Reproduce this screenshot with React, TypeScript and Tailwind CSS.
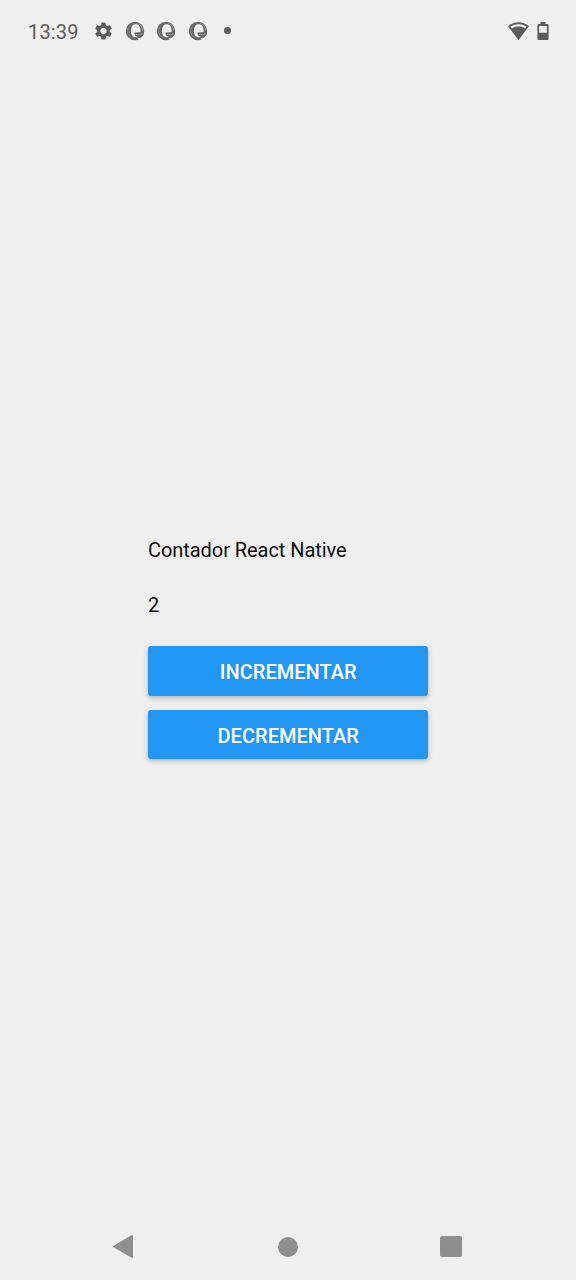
import { useState } from 'react';
import { MdSettings } from 'react-icons/md';

function SwirlIcon() {
  return (
    <svg className="h-5 w-5" viewBox="0 0 20 20" fill="none">
      <circle cx="10" cy="10" r="9.2" fill="#6a6a6a" />
      <path d="M10.5 3.3C13.9 3.3 15.8 6 15.6 10.2C15.3 13.5 14 16.3 10.8 16.3C7.5 16.3 5.9 13.3 6 9.7C6.1 6 7.6 3.3 10.5 3.3Z" fill="#efefef" />
      <path d="M12.5 2.4C15.8 3.6 17.6 6.2 17.7 9.6" stroke="#a2a2a2" strokeWidth=".9" />
      <path d="M3.4 6.2C2.1 9.4 2.7 13.3 5.4 15.9" stroke="#8c8c8c" strokeWidth=".8" />
      <path d="M9.2 11.4C11.6 12 14.8 10.3 19.1 10.8C18.7 14.3 16.6 16.2 14 16C11.2 15.8 9.2 14.2 9.2 11.4Z" fill="#666" />
      <path d="M10.8 13.6C13 14.1 15.5 13 18.2 12.9" stroke="#aaa" strokeWidth=".8" />
      <path d="M12.3 17.2C14.8 17.6 17.2 16.6 18.6 14.3L20 16L14.5 20Z" fill="#efefef" />
    </svg>
  );
}

function StatusBar() {
  return (
    <header className="flex h-[61px] shrink-0 items-center pl-7 pr-[27px] text-[#5c5c5c]">
      <span className="w-[65px] pt-[2px] text-[20px] leading-6 tracking-[0.15px]">13:39</span>
      <MdSettings className="h-[22px] w-[21px]" />
      <div className="ml-[11px] flex gap-[11.3px]">
        <SwirlIcon />
        <SwirlIcon />
        <SwirlIcon />
      </div>
      <span className="ml-[16.4px] h-[7px] w-[7px] rounded-full bg-[#5c5c5c]" />
      <div className="ml-auto flex items-center gap-[8.5px]">
        <svg className="h-[18px] w-[21px]" viewBox="0 0 21 18">
          <path d="M0 4.3C6-1.1 15-1.1 21 4.3L10.5 18Z" fill="#5c5c5c" />
          <path d="M2.5 4.6C7.2 1.3 13.8 1.3 18.5 4.6L17.2 6.4C13.2 3.8 7.8 3.8 3.8 6.4Z" fill="#efefef" />
        </svg>
        <svg className="h-[18px] w-3" viewBox="0 0 12 18">
          <path fillRule="evenodd" d="M3.5 0H8.5V2H10.4Q11.6 2 11.6 3.2V16.8Q11.6 18 10.4 18H1.6Q.4 18 .4 16.8V3.2Q.4 2 1.6 2H3.5ZM2.2 4V10.8H9.8V4Z" fill="#5c5c5c" />
        </svg>
      </div>
    </header>
  );
}

function CounterButton({ title, onPress }: { title: string; onPress: () => void }) {
  return (
    <button
      onClick={onPress}
      className="flex h-[49.5px] w-full items-center justify-center rounded-[3px] bg-[#2196f3] pt-[3px] pl-[0.5px] text-[20px] font-medium tracking-[0.03px] text-white shadow-[0_2px_5px_rgba(0,0,0,0.26)]"
    >
      {title}
    </button>
  );
}

export default function App() {
  const [count, setCount] = useState(2);
  return (
    <div className="flex h-[1280px] w-[576px] flex-col bg-[#efefef] font-['Roboto',sans-serif]">
      <StatusBar />
      <main className="flex grow flex-col items-center pt-[475px]">
        <div className="w-[280px] text-[20px] leading-7 text-[#0c0c0c]">
          <p className="tracking-[-0.06px]">Contador React Native</p>
          <p className="mt-[27px]">{count}</p>
          <div className="mt-[27px] flex flex-col gap-[14px]">
            <CounterButton title="INCREMENTAR" onPress={() => setCount(count + 1)} />
            <CounterButton title="DECREMENTAR" onPress={() => setCount(count - 1)} />
          </div>
        </div>
      </main>
      <nav className="flex h-[66px] shrink-0 items-center pb-px pl-[113px]">
        <svg className="h-[23px] w-5" viewBox="0 0 20 23">
          <path d="M.5 10.8L18.5 .3Q20 -.2 20 1V22Q20 23.2 18.5 22.7L.5 12.2Q-.4 11.5.5 10.8Z" fill="#8f8f8f" />
        </svg>
        <span className="ml-[145px] h-5 w-5 rounded-full bg-[#8f8f8f]" />
        <span className="ml-[142px] h-[21.5px] w-[21.5px] rounded-[2px] bg-[#8f8f8f]" />
      </nav>
    </div>
  );
}
